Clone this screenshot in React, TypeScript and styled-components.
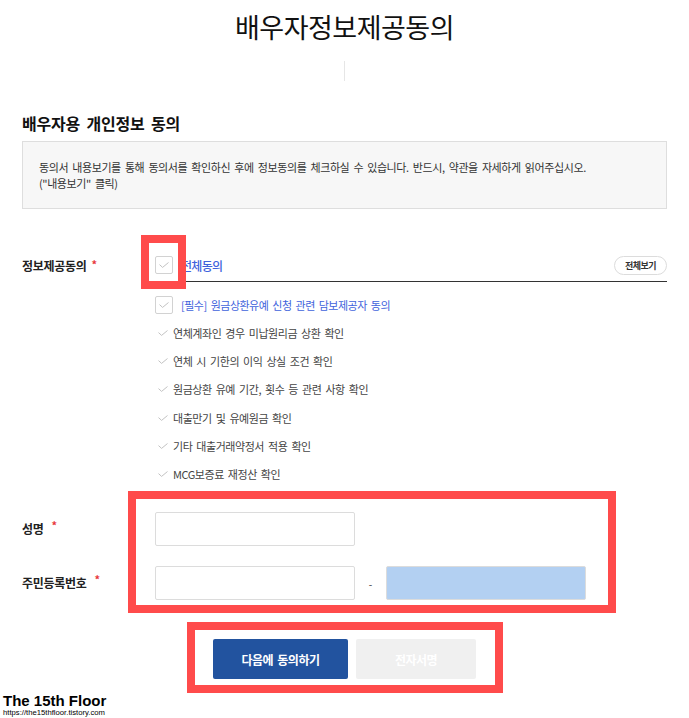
import React from 'react';
import styled, { createGlobalStyle } from 'styled-components';

const GlobalStyle = createGlobalStyle`
  html, body {
    margin: 0;
    padding: 0;
    background: #fff;
  }
  body {
    font-family: "Noto Sans CJK KR", "Noto Sans", sans-serif;
    color: #222;
  }
  * {
    box-sizing: border-box;
  }
`;

const items = [
  '연체계좌인 경우 미납원리금 상환 확인',
  '연체 시 기한의 이익 상실 조건 확인',
  '원금상환 유예 기간, 횟수 등 관련 사항 확인',
  '대출만기 및 유예원금 확인',
  '기타 대출거래약정서 적용 확인',
  'MCG보증료 재정산 확인',
];

const CheckMark: React.FC<{ size?: number }> = ({ size = 10 }) => (
  <svg width={size} height={size * 0.6} viewBox="0 0 10 6" fill="none">
    <polyline points="0.5,2.6 3.6,5.4 9.5,0.5" stroke="#c2c2c2" strokeWidth="1" />
  </svg>
);

export default function App() {
  return (
    <Page>
      <GlobalStyle />
      <Main>
        <Title>배우자정보제공동의</Title>
        <Divider />
        <SectionTitle>배우자용 개인정보 동의</SectionTitle>
        <InfoBox>
          동의서 내용보기를 통해 동의서를 확인하신 후에 정보동의를 체크하실 수 있습니다. 반드시, 약관을 자세하게 읽어주십시오.
          <br />
          ("내용보기" 클릭)
        </InfoBox>

        <AgreeRow>
          <Label>
            정보제공동의<Required>*</Required>
          </Label>
          <AgreeBody>
            <AllRow>
              <CheckBox>
                <CheckMark />
              </CheckBox>
              <BlueText $size={12}>전체동의</BlueText>
              <PillButton>전체보기</PillButton>
            </AllRow>
            <SubRow>
              <CheckBox>
                <CheckMark />
              </CheckBox>
              <BlueText $size={11}>[필수] 원금상환유예 신청 관련 담보제공자 동의</BlueText>
            </SubRow>
            <ItemList>
              {items.map(text => (
                <Item key={text}>
                  <CheckMark />
                  <span>{text}</span>
                </Item>
              ))}
            </ItemList>
          </AgreeBody>
        </AgreeRow>

        <FieldRow $gap={24}>
          <Label $lh={34}>
            성명<Required $wide>*</Required>
          </Label>
          <Fields>
            <TextInput />
          </Fields>
        </FieldRow>
        <FieldRow $gap={20}>
          <Label $lh={34}>
            주민등록번호<Required $wide>*</Required>
          </Label>
          <Fields>
            <TextInput />
            <Dash>-</Dash>
            <TextInput $selected />
          </Fields>
        </FieldRow>

        <Buttons>
          <PrimaryButton>다음에 동의하기</PrimaryButton>
          <DisabledButton>전자서명</DisabledButton>
        </Buttons>
      </Main>

      <Footer>
        <Brand>The 15th Floor</Brand>
        <BrandUrl>https://the15thfloor.tistory.com</BrandUrl>
      </Footer>

      <Highlight $top={235} $left={141} $w={45} $h={54} />
      <Highlight $top={491} $left={128} $w={488} $h={122} />
      <Highlight $top={622} $left={187} $w={316} $h={71} />
    </Page>
  );
}

const Page = styled.div`
  position: relative;
  width: 689px;
  min-height: 718px;
  overflow: hidden;
`;

const Main = styled.div`
  padding: 10px 22px 0;
  display: flex;
  flex-direction: column;
`;

const Title = styled.h1`
  margin: 0;
  font-size: 27px;
  line-height: 34px;
  font-weight: 400;
  letter-spacing: -0.5px;
  color: #111;
  text-align: center;
`;

const Divider = styled.div`
  align-self: center;
  width: 1px;
  height: 20px;
  margin-top: 17px;
  background: #e6e6e6;
`;

const SectionTitle = styled.h2`
  margin: 32px 0 0;
  font-size: 16px;
  line-height: 20px;
  font-weight: 700;
  letter-spacing: -0.2px;
  word-spacing: 3px;
  color: #111;
`;

const InfoBox = styled.div`
  margin-top: 8px;
  padding: 17px 16px;
  background: #f7f7f7;
  border: 1px solid #dedede;
  font-size: 11px;
  line-height: 16px;
  letter-spacing: -0.4px;
  word-spacing: 2px;
  color: #333;
`;

const AgreeRow = styled.div`
  display: grid;
  grid-template-columns: 133px 1fr;
  margin-top: 41px;
`;

const Label = styled.div<{ $lh?: number }>`
  font-size: 12px;
  line-height: ${p => p.$lh ?? 31}px;
  font-weight: 700;
  letter-spacing: -0.3px;
  color: #222;
  display: flex;
  align-items: flex-start;
`;

const Required = styled.span<{ $wide?: boolean }>`
  margin-left: ${p => (p.$wide ? 8 : 5)}px;
  color: #e8383d;
  font-size: 11px;
  line-height: ${p => (p.$wide ? 26 : 28)}px;
`;

const AgreeBody = styled.div`
  display: flex;
  flex-direction: column;
`;

const AllRow = styled.div`
  display: flex;
  align-items: center;
  gap: 8px;
  height: 32px;
  padding-bottom: 1px;
  border-bottom: 1px solid #333;
`;

const SubRow = styled.div`
  display: flex;
  align-items: center;
  gap: 8px;
  height: 18px;
  margin-top: 14px;
`;

const CheckBox = styled.span`
  width: 18px;
  height: 18px;
  flex: none;
  display: flex;
  align-items: center;
  justify-content: center;
  border: 1px solid #d2d2d2;
  border-radius: 2px;
  background: #fff;
`;

const BlueText = styled.span<{ $size: number }>`
  font-size: ${p => p.$size}px;
  font-weight: ${p => (p.$size > 11 ? 500 : 400)};
  letter-spacing: ${p => (p.$size > 11 ? -0.7 : -0.5)}px;
  word-spacing: 2px;
  color: #3f63dc;
`;

const PillButton = styled.button`
  margin-left: auto;
  height: 19px;
  padding: 0 10px;
  border: 1px solid #dcdcdc;
  border-radius: 10px;
  background: #fff;
  font-family: inherit;
  font-size: 9px;
  font-weight: 700;
  letter-spacing: -0.5px;
  color: #333;
  line-height: 17px;
`;

const ItemList = styled.ul`
  list-style: none;
  margin: 5px 0 0;
  padding: 0 0 0 3px;
`;

const Item = styled.li`
  display: flex;
  align-items: center;
  gap: 5px;
  height: 28.2px;
  font-size: 11px;
  letter-spacing: -0.45px;
  word-spacing: 2px;
  color: #444;
`;

const FieldRow = styled.div<{ $gap: number }>`
  display: grid;
  grid-template-columns: 133px 1fr;
  margin-top: ${p => p.$gap}px;
`;

const Fields = styled.div`
  display: flex;
  align-items: center;
`;

const TextInput = styled.div<{ $selected?: boolean }>`
  width: 200px;
  height: 34px;
  border: 1px solid #dcdcdc;
  border-radius: 2px;
  background: ${p => (p.$selected ? '#b3d0f2' : '#fff')};
`;

const Dash = styled.span`
  width: 31px;
  text-align: center;
  font-size: 10px;
  color: #333;
`;

const Buttons = styled.div`
  display: flex;
  justify-content: center;
  gap: 8px;
  margin-top: 39px;
`;

const BaseButton = styled.button`
  height: 40px;
  border: none;
  border-radius: 2px;
  font-family: inherit;
  font-size: 12px;
  font-weight: 700;
  letter-spacing: -0.5px;
  word-spacing: 2px;
  color: #fff;
`;

const PrimaryButton = styled(BaseButton)`
  width: 135px;
  background: #22539f;
`;

const DisabledButton = styled(BaseButton)`
  width: 120px;
  background: #f0f0f0;
`;

const Footer = styled.div`
  margin-top: 14px;
  padding-left: 3px;
  display: flex;
  flex-direction: column;
`;

const Brand = styled.div`
  font-family: "Liberation Sans", Arial, sans-serif;
  font-size: 15px;
  line-height: 15px;
  font-weight: 700;
  color: #000;
`;

const BrandUrl = styled.div`
  font-family: "Liberation Sans", Arial, sans-serif;
  font-size: 7.7px;
  line-height: 10px;
  color: #000;
`;

const Highlight = styled.div<{ $top: number; $left: number; $w: number; $h: number }>`
  position: absolute;
  top: ${p => p.$top}px;
  left: ${p => p.$left}px;
  width: ${p => p.$w}px;
  height: ${p => p.$h}px;
  border: 8px solid #ff4b4b;
  pointer-events: none;
`;
